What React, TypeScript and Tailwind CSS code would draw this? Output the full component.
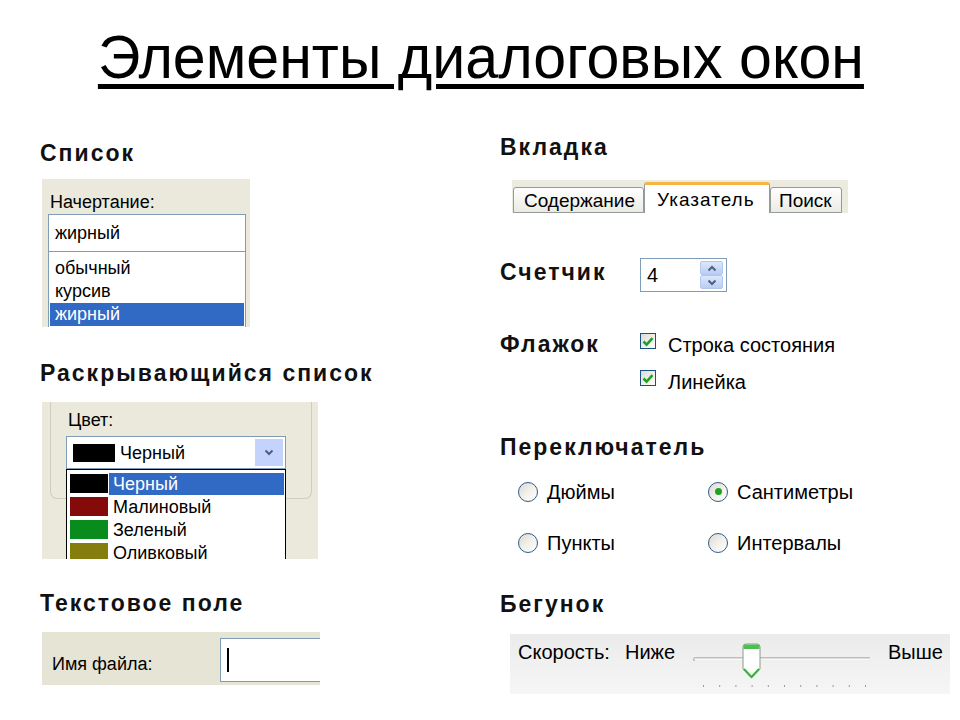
import React from "react";

const heading =
  "font-bold text-[23px] leading-none tracking-[2px] text-[#111] whitespace-nowrap";

function Chevron({ dir = "down", color = "#4d6185" }: { dir?: "up" | "down"; color?: string }) {
  return (
    <svg width="10" height="7" viewBox="0 0 10 7">
      <path
        d={dir === "down" ? "M1.5 1.5 L5 5 L8.5 1.5" : "M1.5 5.5 L5 2 L8.5 5.5"}
        fill="none"
        stroke={color}
        strokeWidth="2"
      />
    </svg>
  );
}

function ListBox() {
  return (
    <div className="ml-[2px] mt-[14px] w-[208px] h-[148px] bg-[#ebe9dc] overflow-hidden pt-[14px] pl-[6px] pr-[4px]">
      <div className="pl-[2px] text-[18px] leading-none">Начертание:</div>
      <div className="mt-[3px] h-[38px] border border-[#7f9db9] bg-white flex items-center pl-[6px] text-[18px] leading-none">
        жирный
      </div>
      <div className="h-[120px] border border-t-0 border-[#7f9db9] bg-white pt-[5px] px-[1px] text-[18px]">
        <div className="h-[23px] leading-[23px] pl-[5px]">обычный</div>
        <div className="h-[23px] leading-[23px] pl-[5px]">курсив</div>
        <div className="h-[23px] leading-[23px] pl-[5px] bg-[#316ac5] text-white">жирный</div>
      </div>
    </div>
  );
}

const colors = [
  { name: "Черный", c: "bg-black", sel: true },
  { name: "Малиновый", c: "bg-[#850a0a]", sel: false },
  { name: "Зеленый", c: "bg-[#0a8c1c]", sel: false },
  { name: "Оливковый", c: "bg-[#857d0e]", sel: false },
];

function DropDown() {
  return (
    <div className="relative ml-[2px] mt-[17px] w-[276px] h-[157px] bg-[#ebe9dc] overflow-hidden pl-[8px] pr-[6px]">
      <div className="h-[97px] border border-t-0 border-[#cfcdbb] rounded-b-[7px] pl-[15px] pt-[9px]">
        <div className="pl-[2px] text-[18px] leading-none">Цвет:</div>
        <div className="mt-[7px] w-[220px] h-[33px] border border-[#7f9db9] bg-white flex items-center pl-[6px] pr-[2px]">
          <div className="w-[42px] h-[18px] bg-black" />
          <span className="ml-[5px] text-[18px] leading-none">Черный</span>
          <div className="ml-auto w-[28px] h-[27px] bg-[#c3d3fb] flex items-center justify-center">
            <Chevron dir="down" />
          </div>
        </div>
      </div>
      <div className="absolute left-[24px] top-[67px] w-[220px] h-[100px] border border-black bg-white pt-[2px] text-[18px]">
        {colors.map((r) => (
          <div key={r.name} className="h-[23px] flex items-center">
            <div className={`ml-[3px] w-[38px] h-[19px] ${r.c}`} />
            <div
              className={`ml-[1px] mr-[1px] flex-1 h-[22px] leading-[22px] pl-[4px] ${
                r.sel ? "bg-[#316ac5] text-white" : ""
              }`}
            >
              {r.name}
            </div>
          </div>
        ))}
      </div>
    </div>
  );
}

function TextField() {
  return (
    <div className="ml-[2px] mt-[17px] w-[278px] h-[53px] bg-[#e6e4d4] overflow-hidden flex">
      <div className="w-[178px] shrink-0 pl-[10px] pt-[23px] text-[18px] leading-none">Имя файла:</div>
      <div className="mt-[6px] w-[120px] h-[44px] shrink-0 border border-[#7f9db9] bg-white flex items-center pl-[6px]">
        <div className="w-[2px] h-[24px] bg-black" />
      </div>
    </div>
  );
}

function Tabs() {
  return (
    <div className="ml-[12px] mt-[21px] w-[336px] h-[33px] bg-[#ecebe0] flex items-end pl-[1px] text-[19px] leading-none">
      <div className="w-[131px] h-[26px] border border-[#919b9c] rounded-t-[3px] bg-gradient-to-b from-white to-[#ebeae3] flex items-center pl-[10px]">
        Содержание
      </div>
      <div className="w-[126px] h-[31px] border-x border-[#919b9c] border-t-[3px] border-t-[#f3b643] rounded-t-[3px] bg-white flex items-center pl-[12px] tracking-[1px]">
        Указатель
      </div>
      <div className="w-[72px] h-[26px] border border-[#919b9c] rounded-t-[3px] bg-gradient-to-b from-white to-[#ebeae3] flex items-center pl-[8px]">
        Поиск
      </div>
    </div>
  );
}

function Spinner() {
  return (
    <div className="w-[87px] h-[34px] border border-[#7f9db9] bg-white flex items-center pl-[6px] pr-[3px]">
      <span className="text-[20px] leading-none">4</span>
      <div className="ml-auto flex flex-col w-[23px] h-[28px]">
        <div className="h-[14px] bg-gradient-to-b from-[#dde7fb] to-[#b9cdf5] border border-[#b4c8ef] rounded-[2px] flex items-center justify-center">
          <Chevron dir="up" />
        </div>
        <div className="h-[14px] bg-gradient-to-b from-[#dde7fb] to-[#b9cdf5] border border-[#b4c8ef] rounded-[2px] flex items-center justify-center">
          <Chevron dir="down" />
        </div>
      </div>
    </div>
  );
}

function CheckBox({ label }: { label: string }) {
  return (
    <div className="h-[37px] flex items-start">
      <div className="mt-[1px] w-[16px] h-[16px] border border-[#1c5180] bg-gradient-to-br from-[#dcdcd6] to-white flex items-center justify-center">
        <svg width="12" height="11" viewBox="0 0 12 11">
          <path d="M1.5 5.5 L4.6 8.6 L10.5 2.2" fill="none" stroke="#21a121" strokeWidth="2.6" />
        </svg>
      </div>
      <span className="ml-[12px] mt-[3px] text-[20px] leading-none">{label}</span>
    </div>
  );
}

function Radio({ label, checked = false }: { label: string; checked?: boolean }) {
  return (
    <div className="h-[20px] flex items-center">
      <div className="w-[20px] h-[20px] rounded-full border-[1.5px] border-[#2f5a8e] bg-gradient-to-br from-[#dcd9cf] via-[#f1f0ea] to-white flex items-center justify-center">
        {checked && <div className="w-[7px] h-[7px] rounded-full bg-[#21a121]" />}
      </div>
      <span className="ml-[9px] text-[20px] leading-none">{label}</span>
    </div>
  );
}

function Slider() {
  const ticks = Array.from({ length: 11 }, (_, i) => 10 + i * 16.2);
  return (
    <div className="ml-[10px] mt-[18px] w-[440px] h-[60px] bg-gradient-to-b from-[#ebebeb] to-[#f6f6f6] flex pl-[8px] text-[20px] leading-none">
      <span className="w-[107px] pt-[8px]">Скорость:</span>
      <span className="w-[68px] pt-[8px]">Ниже</span>
      <svg width="177" height="60" viewBox="0 0 177 60" className="shrink-0">
        <path d="M1 27 V24 H177" fill="none" stroke="#8a8a8a" strokeWidth="1" />
        <path d="M1 25 H177" fill="none" stroke="#ffffff" strokeWidth="1" />
        {ticks.map((x, i) => (
          <rect key={i} x={x} y={51} width="1" height="2" fill="#9a9a9a" />
        ))}
        <path
          d="M50 13 Q50 10 53 10 H64 Q67 10 67 13 V35 L58.5 44 L50 35 Z"
          fill="#ffffff"
          stroke="#8a9a8a"
          strokeWidth="1"
        />
        <path d="M50.5 15 V13 Q50.5 10.5 53 10.5 H64 Q66.5 10.5 66.5 13 V15 Z" fill="#4fbf4f" />
        <path d="M51 35 L58.5 43 L66 35" fill="none" stroke="#3fae3f" strokeWidth="2" />
      </svg>
      <span className="ml-[18px] pt-[8px]">Выше</span>
    </div>
  );
}

export default function App() {
  return (
    <div className="w-[960px] h-[720px] bg-white overflow-hidden font-['Liberation_Sans',Arial,sans-serif] text-black">
      <div className="pt-[26px] h-[88px] flex justify-center">
        <h1 className="ml-[2px] text-[62px] leading-none whitespace-nowrap underline decoration-[5px] underline-offset-[6px] scale-x-[0.953]">
          Элементы диалоговых окон
        </h1>
      </div>
      <div className="flex">
        <div className="w-[500px] shrink-0 pl-[40px] pt-[54px] flex flex-col items-start">
          <h2 className={heading}>Список</h2>
          <ListBox />
          <h2 className={`${heading} mt-[35px]`}>Раскрывающийся список</h2>
          <DropDown />
          <h2 className={`${heading} mt-[33px]`}>Текстовое поле</h2>
          <TextField />
        </div>
        <div className="pt-[48px] flex flex-col items-start">
          <h2 className={heading}>Вкладка</h2>
          <Tabs />
          <div className="mt-[45px] flex items-start">
            <h2 className={`${heading} w-[140px] mt-[2.5px]`}>Счетчик</h2>
            <Spinner />
          </div>
          <div className="mt-[40px] flex items-start">
            <h2 className={`${heading} w-[140px] mt-[0.5px]`}>Флажок</h2>
            <div className="flex flex-col">
              <CheckBox label="Строка состояния" />
              <CheckBox label="Линейка" />
            </div>
          </div>
          <h2 className={`${heading} mt-[30px]`}>Переключатель</h2>
          <div className="ml-[18px] mt-[22.5px] grid grid-cols-[190px_auto] gap-y-[31px]">
            <Radio label="Дюймы" />
            <Radio label="Сантиметры" checked />
            <Radio label="Пункты" />
            <Radio label="Интервалы" />
          </div>
          <h2 className={`${heading} mt-[40.5px]`}>Бегунок</h2>
          <Slider />
        </div>
      </div>
    </div>
  );
}
